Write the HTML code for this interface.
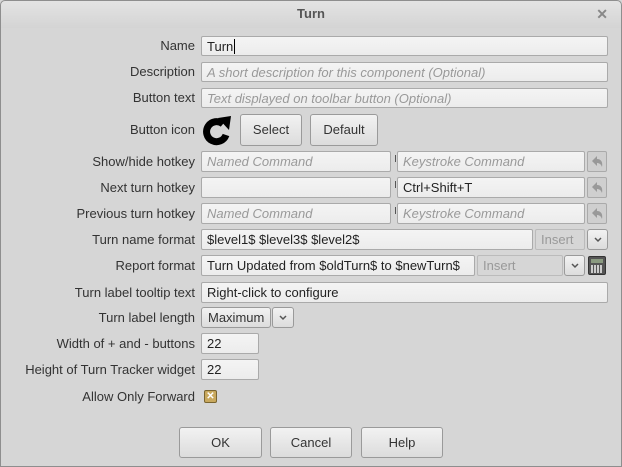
<!DOCTYPE html>
<html><head><meta charset="utf-8"><style>
*{box-sizing:border-box;margin:0;padding:0}
body{width:622px;height:467px;background:#d6d6d6;font-family:"Liberation Sans",sans-serif;font-size:13px;color:#333;position:relative;overflow:hidden}
.win{position:absolute;left:0;top:0;width:622px;height:467px;background:#d6d6d6}
.frame{position:absolute;left:0;top:0;width:622px;height:467px;border:1px solid #8e8e8e;border-radius:5px 5px 0 0;pointer-events:none}
.title{position:absolute;left:0;top:0;width:622px;height:28px;background:linear-gradient(#e4e4e4,#d4d4d4);border-radius:5px 5px 0 0;text-align:center;line-height:28px;font-weight:bold;color:#555;font-size:13px}
.x{position:absolute;right:14px;top:0;color:#888;font-size:14px;font-weight:bold}
.l{position:absolute;right:427px;text-align:right;white-space:nowrap;color:#333}
.f{position:absolute;height:21px;border:1px solid #aaa;border-radius:2px;background:linear-gradient(#f4f4f4,#ececec);padding-left:5px;line-height:19px;white-space:nowrap;overflow:hidden;color:#222}
.ph{color:#999;font-style:italic}
.b{position:absolute;border:1px solid #9a9a9a;border-radius:3px;background:linear-gradient(#f2f2f2,#dcdcdc);text-align:center;color:#333}
.dis{color:#999;background:#d6d6d6;border-color:#bbb}
.dash{position:absolute;width:1px;height:7px;background:#555}
.u{position:absolute;left:587px;width:20px;height:21px;border:1px solid #aaa;border-radius:2px;background:#cfcfcf}
.chev{position:absolute;left:50%;top:50%;margin:-3px 0 0 -4px}
</style></head><body>
<div class="win">
<div class="title">Turn<span class="x">✕</span></div>

<div class="l" style="top:38px">Name</div>
<div class="f" style="left:201px;top:36px;width:407px;height:20px">Turn<span style="border-left:1px solid #000;margin-left:1px"></span></div>
<div class="l" style="top:64px">Description</div>
<div class="f ph" style="left:201px;top:62px;width:407px;height:20px">A short description for this component (Optional)</div>
<div class="l" style="top:90px">Button text</div>
<div class="f ph" style="left:201px;top:88px;width:407px;height:20px">Text displayed on toolbar button (Optional)</div>

<div class="l" style="top:122px">Button icon</div>
<svg style="position:absolute;left:201px;top:113px" width="32" height="34" viewBox="0 0 32 34"><path d="M22 11 A10 10 0 1 0 25 22" fill="none" stroke="#000" stroke-width="7"/><path d="M17 5 L30 3 L28 17 Z" fill="#000"/></svg>
<div class="b" style="left:240px;top:114px;width:62px;height:32px;line-height:30px">Select</div>
<div class="b" style="left:310px;top:114px;width:68px;height:32px;line-height:30px">Default</div>

<div class="l" style="top:154px">Show/hide hotkey</div>
<div class="f ph" style="left:201px;top:151px;width:190px">Named Command</div>
<div class="dash" style="left:395px;top:155px"></div>
<div class="f ph" style="left:397px;top:151px;width:188px">Keystroke Command</div>
<div class="u" style="top:151px"></div>

<div class="l" style="top:180px">Next turn hotkey</div>
<div class="f" style="left:201px;top:177px;width:190px"></div>
<div class="dash" style="left:395px;top:181px"></div>
<div class="f" style="left:397px;top:177px;width:188px">Ctrl+Shift+T</div>
<div class="u" style="top:177px"></div>

<div class="l" style="top:206px">Previous turn hotkey</div>
<div class="f ph" style="left:201px;top:203px;width:190px">Named Command</div>
<div class="dash" style="left:395px;top:207px"></div>
<div class="f ph" style="left:397px;top:203px;width:188px">Keystroke Command</div>
<div class="u" style="top:203px"></div>

<div class="l" style="top:232px">Turn name format</div>
<div class="f" style="left:201px;top:229px;width:332px">$level1$ $level3$ $level2$</div>
<div class="f dis" style="left:535px;top:229px;width:50px">Insert</div>
<div class="b" style="left:587px;top:229px;width:21px;height:21px"><svg class="chev" width="8" height="6"><path d="M1 1 L4 4 L7 1" fill="none" stroke="#555" stroke-width="1.5"/></svg></div>

<div class="l" style="top:258px">Report format</div>
<div class="f" style="left:201px;top:255px;width:274px">Turn Updated from $oldTurn$ to $newTurn$</div>
<div class="f dis" style="left:477px;top:255px;width:86px">Insert</div>
<div class="b" style="left:564px;top:255px;width:21px;height:21px"><svg class="chev" width="8" height="6"><path d="M1 1 L4 4 L7 1" fill="none" stroke="#555" stroke-width="1.5"/></svg></div>
<div style="position:absolute;left:588px;top:256px;width:18px;height:19px;background:#555;border:1px solid #333;border-radius:2px"><div style="margin:2px;height:4px;background:#8a9a80"></div><div style="margin:1px 2px;height:8px;background:repeating-linear-gradient(90deg,#ccc 0 2px,#555 2px 3px)"></div></div>

<div class="l" style="top:285px">Turn label tooltip text</div>
<div class="f" style="left:201px;top:282px;width:407px">Right-click to configure</div>

<div class="l" style="top:310px">Turn label length</div>
<div class="b" style="left:201px;top:307px;width:70px;height:21px;line-height:19px;text-align:left;padding-left:6px">Maximum</div>
<div class="b" style="left:272px;top:307px;width:22px;height:21px"><svg class="chev" width="8" height="6"><path d="M1 1 L4 4 L7 1" fill="none" stroke="#555" stroke-width="1.5"/></svg></div>

<div class="l" style="top:336px">Width of + and - buttons</div>
<div class="f" style="left:201px;top:333px;width:58px">22</div>
<div class="l" style="top:362px">Height of Turn Tracker widget</div>
<div class="f" style="left:201px;top:359px;width:58px">22</div>

<div class="l" style="top:389px">Allow Only Forward</div>
<div style="position:absolute;left:204px;top:390px;width:13px;height:13px;background:#c9a95e;border:1px solid #7a6530;border-radius:2px;color:#fff;font-size:10px;line-height:11px;text-align:center;font-weight:bold">✕</div>

<div class="b" style="left:179px;top:427px;width:83px;height:31px;line-height:29px">OK</div>
<div class="b" style="left:270px;top:427px;width:82px;height:31px;line-height:29px">Cancel</div>
<div class="b" style="left:361px;top:427px;width:82px;height:31px;line-height:29px">Help</div>
</div>
<div class="frame"></div>
<svg style="position:absolute;left:590px;top:155px" width="14" height="14"><path d="M2 6 L7 1 L7 4 C11 4 13 7 12 12 C11 9 9 8 7 8 L7 11 Z" fill="#999"/></svg>
<svg style="position:absolute;left:590px;top:181px" width="14" height="14"><path d="M2 6 L7 1 L7 4 C11 4 13 7 12 12 C11 9 9 8 7 8 L7 11 Z" fill="#999"/></svg>
<svg style="position:absolute;left:590px;top:207px" width="14" height="14"><path d="M2 6 L7 1 L7 4 C11 4 13 7 12 12 C11 9 9 8 7 8 L7 11 Z" fill="#999"/></svg>
</body></html>
